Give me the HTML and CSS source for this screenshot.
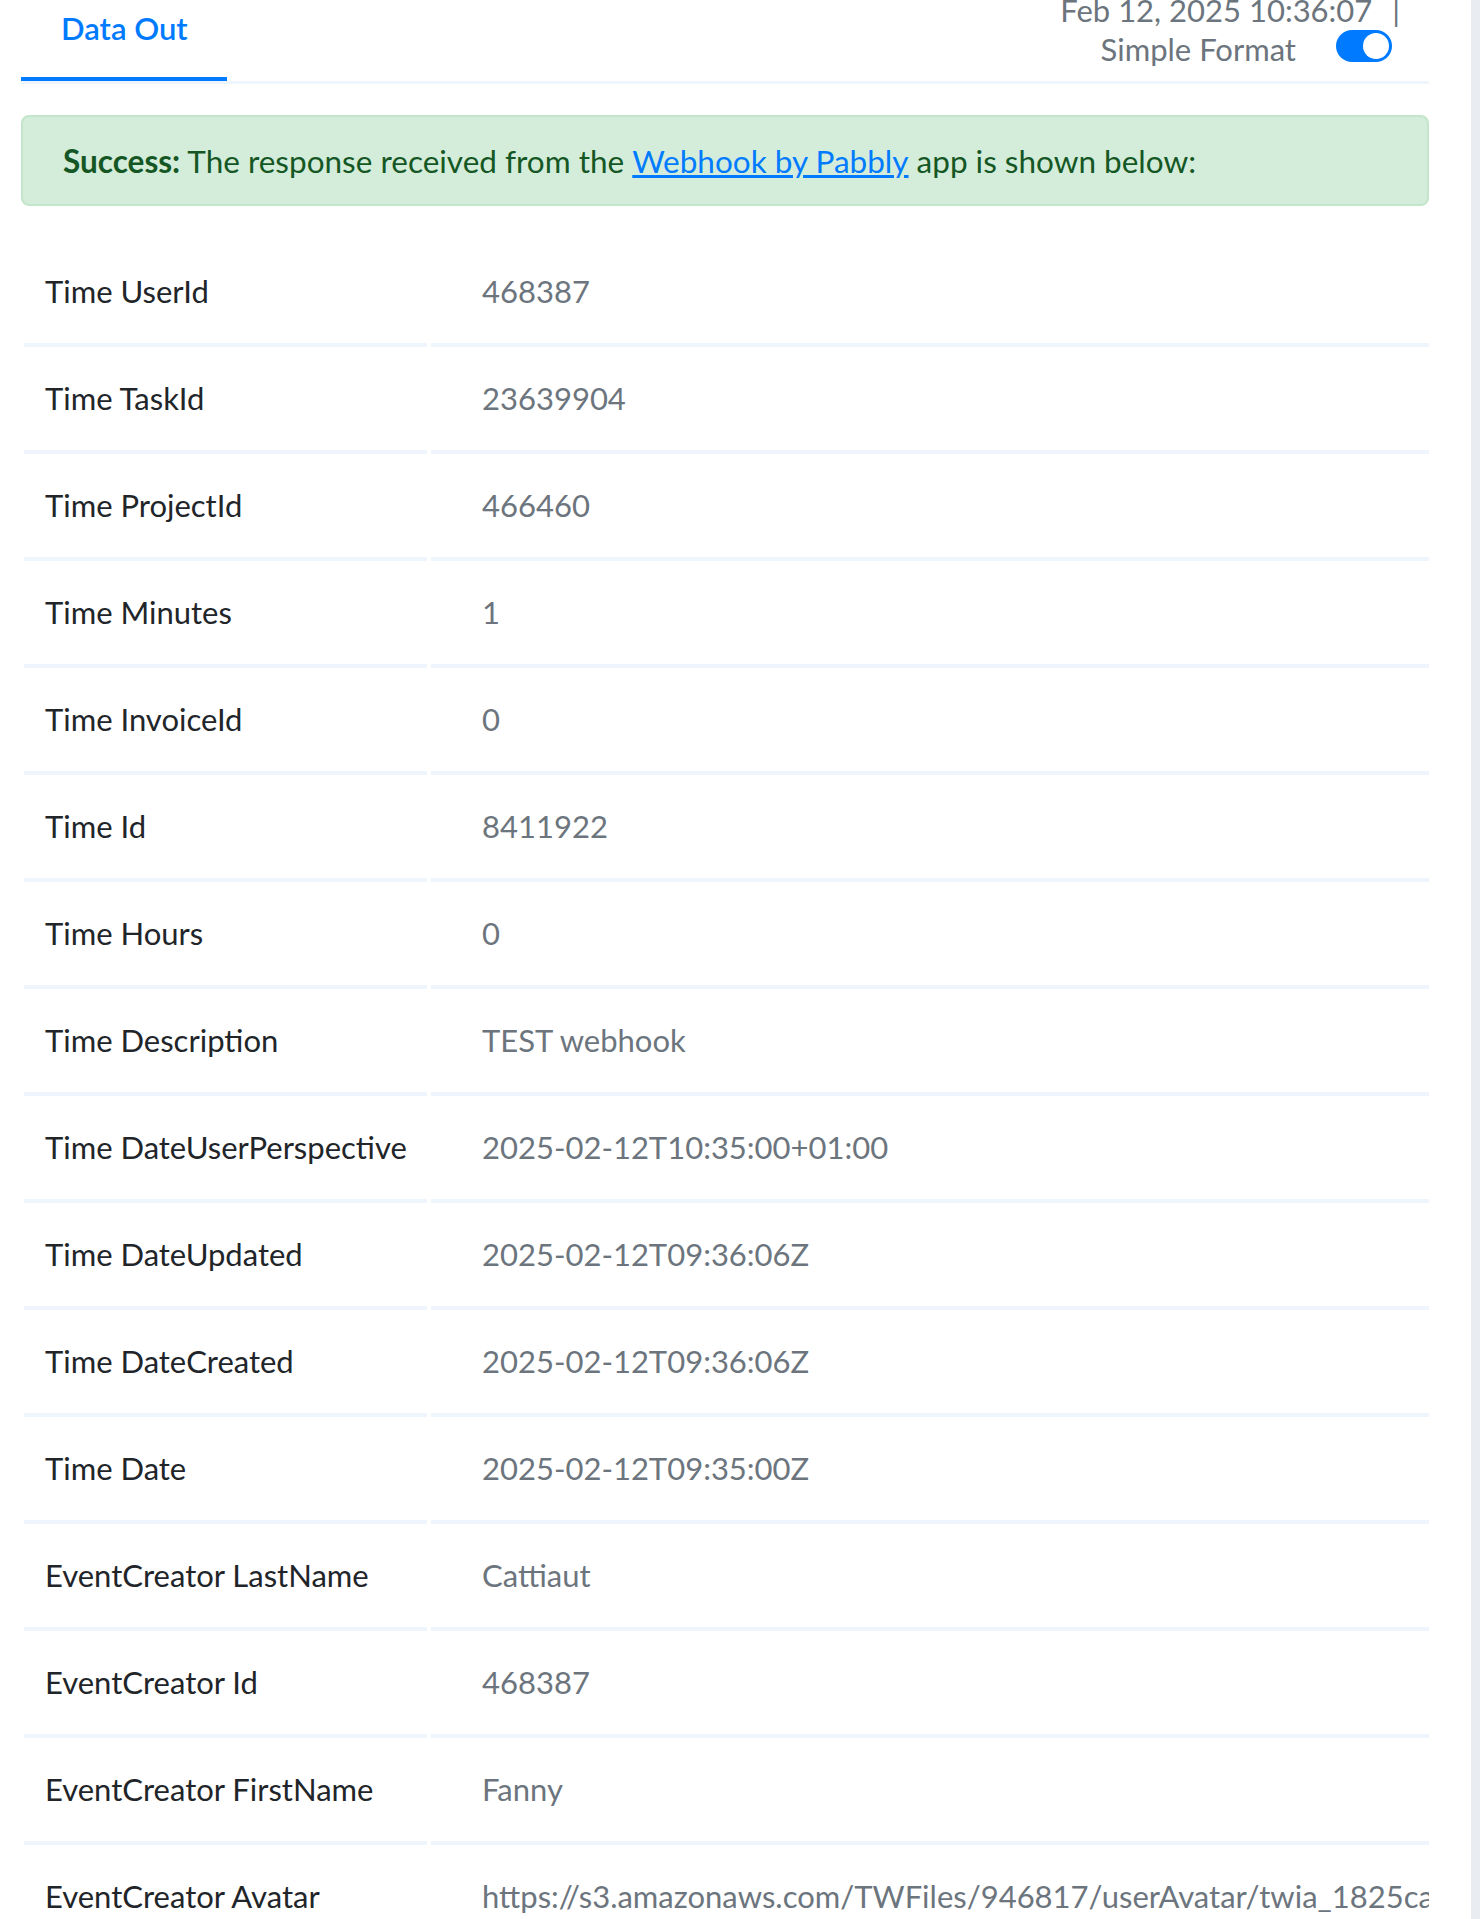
FILE: index.html
```html
<!DOCTYPE html>
<html lang="en">
<head>
    <meta charset="UTF-8">
    <meta name="viewport" content="width=device-width, initial-scale=1.0">
    <title>Data Out</title>
    <link rel="stylesheet" href="styles.css">
</head>
<body>
    <div class="panel">
        <!-- Tabs + run info -->
        <div class="tabs">
            <div class="tab active">Data Out</div>
            <div class="meta">
                <div class="stamp">Feb 12, 2025 10:36:07 <span class="bar">|</span></div>
                <div class="format">
                    Simple Format
                    <span class="switch on"></span>
                </div>
            </div>
        </div>

        <div class="alert">
            <strong>Success:</strong>&nbsp;The response received from the&nbsp;<a href="#">Webhook by Pabbly</a>&nbsp;app is shown below:
        </div>

        <!-- Response fields -->
        <div class="fields">
            <div class="label">Time UserId</div>
            <div class="value">468387</div>

            <div class="label">Time TaskId</div>
            <div class="value">23639904</div>

            <div class="label">Time ProjectId</div>
            <div class="value">466460</div>

            <div class="label">Time Minutes</div>
            <div class="value">1</div>

            <div class="label">Time InvoiceId</div>
            <div class="value">0</div>

            <div class="label">Time Id</div>
            <div class="value">8411922</div>

            <div class="label">Time Hours</div>
            <div class="value">0</div>

            <div class="label">Time Description</div>
            <div class="value">TEST webhook</div>

            <div class="label">Time DateUserPerspective</div>
            <div class="value">2025-02-12T10:35:00+01:00</div>

            <div class="label">Time DateUpdated</div>
            <div class="value">2025-02-12T09:36:06Z</div>

            <div class="label">Time DateCreated</div>
            <div class="value">2025-02-12T09:36:06Z</div>

            <div class="label">Time Date</div>
            <div class="value">2025-02-12T09:35:00Z</div>

            <div class="label">EventCreator LastName</div>
            <div class="value">Cattiaut</div>

            <div class="label">EventCreator Id</div>
            <div class="value">468387</div>

            <div class="label">EventCreator FirstName</div>
            <div class="value">Fanny</div>

            <div class="label">EventCreator Avatar</div>
            <div class="value">https://s3.amazonaws.com/TWFiles/946817/userAvatar/twia_1825ca7f3b0e4d92a61c.jpeg</div>
        </div>
    </div>
    <div class="track"></div>
</body>
</html>
```

FILE: styles.css
```css
body {
    font-family: Lato, "Open Sans", sans-serif;
    font-size: 31px;
    margin: 0;
    color: #212529;
    background: #fff;
    display: flex;
    justify-content: space-between;
    overflow: hidden;
}
.panel {
    width: 1408px;
    margin-left: 21px;
}
.track {
    width: 9px;
    min-height: 100vh;
    background: #e9ecf0;
}

/* tabs */
.tabs {
    display: flex;
    justify-content: space-between;
    align-items: flex-start;
    border-bottom: 3px solid #eef5fc;
    height: 81px;
}
.tab {
    padding: 7px 39px 28px 40px;
    line-height: 42px;
    font-weight: 600;
    color: #007bff;
}
.tab.active {
    border-bottom: 4px solid #007bff;
}
.meta {
    margin-top: -9px;
    padding-right: 34px;
    color: #6c757d;
    display: flex;
    flex-direction: column;
    align-items: flex-end;
}
.stamp {
    line-height: 39px;
    margin-right: -5px;
}
.bar {
    margin-left: 12px;
}
.format {
    line-height: 38px;
    display: flex;
    padding-right: 3px;
}
.switch {
    position: relative;
    width: 56px;
    height: 32px;
    margin-left: 40px;
    border-radius: 16px;
    background: #007bff;
}
.switch::after {
    content: "";
    position: absolute;
    top: 3px;
    right: 3px;
    width: 26px;
    height: 26px;
    border-radius: 50%;
    background: #fff;
}

/* success message */
.alert {
    margin: 31px 0 34px;
    height: 87px;
    padding: 0 40px;
    display: flex;
    align-items: center;
    background: #d4edda;
    border: 2px solid #c3e6cb;
    border-radius: 8px;
    color: #155724;
    font-size: 31.5px;
}
.alert strong {
    font-weight: 700;
}
.alert a {
    color: #007bff;
    text-decoration: underline;
}

/* field table */
.fields {
    display: grid;
    grid-template-columns: 403px 1fr;
    column-gap: 4px;
    padding-left: 3px;
}
.label,
.value {
    padding: 30px 0 31px;
    line-height: 42px;
    border-bottom: 4px solid #eef5fd;
    white-space: nowrap;
    overflow: hidden;
    min-width: 0;
}
.label {
    padding-left: 21px;
}
.value {
    padding-left: 51px;
    color: #6c757d;
}
```
